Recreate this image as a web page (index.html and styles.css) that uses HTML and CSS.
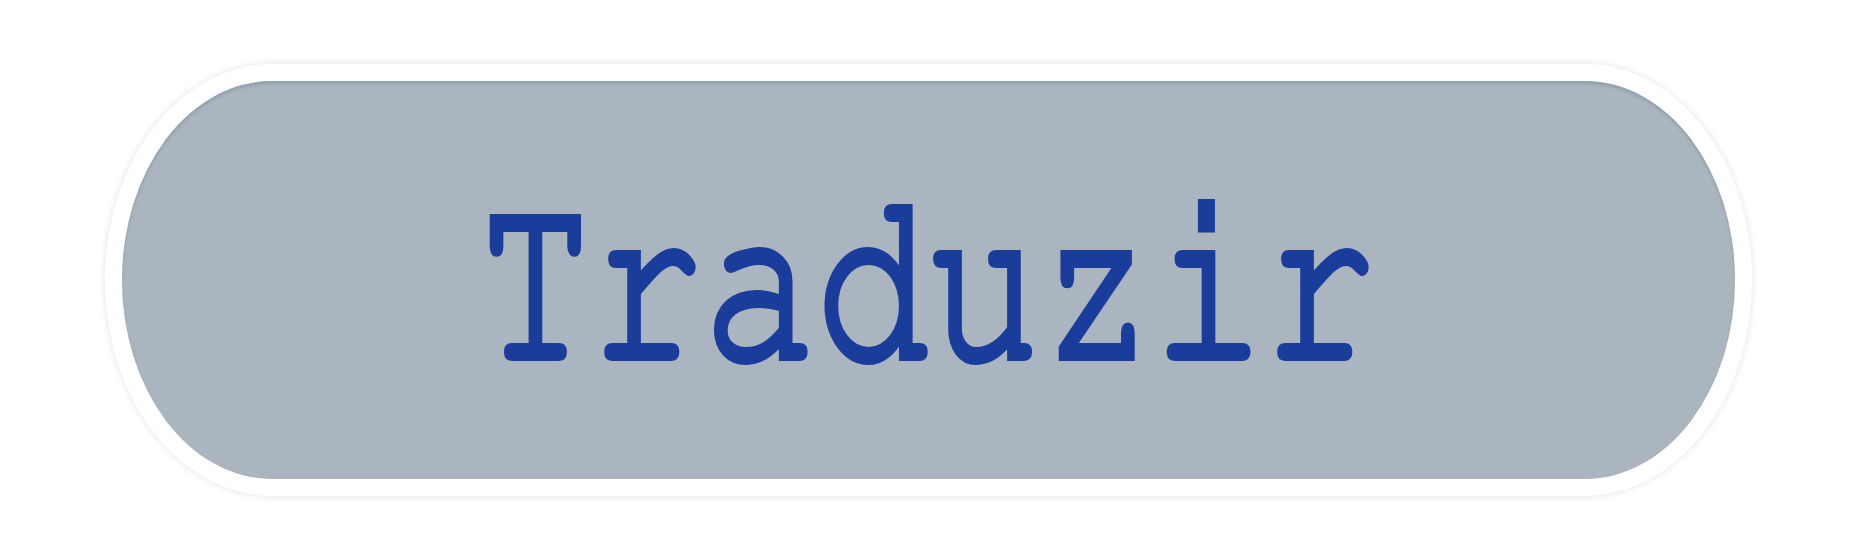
FILE: index.html
```html
<!DOCTYPE html>
<html lang="pt">
<head>
    <meta charset="UTF-8">
    <title>Traduzir</title>
    <meta name="viewport" content="width=device-width, initial-scale=1.0">
    <link rel="stylesheet" href="styles.css">
</head>
<body>
    <main class="stage">
        <button class="btn-translate" type="button"><span class="btn-label">Traduzir</span></button>
    </main>
</body>
</html>
```

FILE: styles.css
```css
html, body {
    margin: 0;
    height: 100%;
    background-color: #ffffff;
}
.stage {
    height: 560px;
    display: flex;
    align-items: center;
    justify-content: center;
}
.btn-translate {
    width: 1613px;
    height: 398px;
    margin-left: 4px;
    padding: 0;
    border: none;
    border-radius: 150px / 199px;
    background-color: #aab5bf;
    box-shadow:
        inset 0 3px 3px rgba(120, 138, 154, 0.45),
        0 0 0 17px #ffffff,
        0 0 4px 20px rgba(214, 222, 230, 0.4);
    cursor: pointer;
    display: flex;
    align-items: center;
    justify-content: center;
}
.btn-label {
    display: inline-block;
    margin-top: 4px;
    font-family: "Nimbus Mono PS", "Nimbus Mono L", "FreeMono", "Courier 10 Pitch", "Courier", monospace;
    font-size: 187px;
    line-height: 1;
    color: #1a3d9b;
    -webkit-text-stroke: 6px #1a3d9b;
    transform: scaleY(1.32);
}
```
